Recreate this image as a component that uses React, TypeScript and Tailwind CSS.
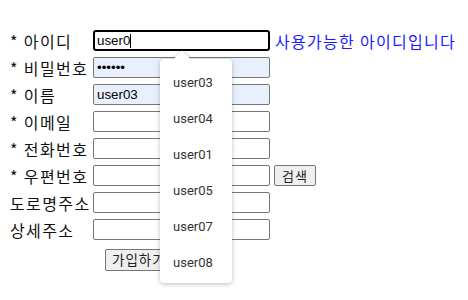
import React from "react";

const rows = [
  { label: "* 비밀번호", value: "••••••", filled: true },
  { label: "* 이름", value: "user03", filled: true },
  { label: "* 이메일", value: "" },
  { label: "* 전화번호", value: "" },
  { label: "* 우편번호", value: "", search: true },
  { label: "도로명주소", value: "" },
  { label: "상세주소", value: "" },
];

const options = ["user03", "user04", "user01", "user05", "user07", "user08"];

export default function App() {
  return (
    <div className="relative w-[468px] h-[300px] bg-white overflow-hidden font-['Noto_Sans_CJK_KR',sans-serif] text-[16px] text-[#111]">
      <div className="pt-[30px] pl-[10px] flex flex-col gap-[6px]">
        <div className="flex items-center h-[21px]">
          <span className="w-[83px] leading-none tracking-[1.4px]">* 아이디</span>
          <div className="w-[177px] h-[21px] border-2 border-black rounded-[3px] flex items-center pl-[2px] font-['Liberation_Sans',sans-serif] text-[13.33px] text-black">
            user0<span className="inline-block w-px h-[14px] bg-black"></span>
          </div>
          <span className="ml-[5px] leading-none tracking-[1.3px] text-[#1a1aff]">사용가능한 아이디입니다</span>
        </div>
        {rows.map((r) => (
          <div key={r.label} className="flex items-center h-[21px]">
            <span className="w-[83px] leading-none tracking-[1.4px] whitespace-nowrap">{r.label}</span>
            <div
              className={`w-[177px] h-[21px] border border-[#767676] rounded-[2px] flex items-center pl-[3px] font-['Liberation_Sans',sans-serif] text-[13.33px] text-black ${
                r.filled ? "bg-[#e8f0fe]" : "bg-white"
              }`}
            >
              {r.value}
            </div>
            {r.search && (
              <button className="ml-[4px] w-[42px] h-[21px] border border-[#767676] rounded-[2px] bg-[#efefef] text-[13px] leading-none tracking-[1px] text-[#222]">
                검색
              </button>
            )}
          </div>
        ))}
        <div className="h-[22px] pl-[95px]">
          <button className="h-[22px] px-[6px] border border-[#767676] rounded-[2px] bg-[#efefef] text-[13.5px] leading-none tracking-[1px] text-[#222]">
            가입하기
          </button>
        </div>
      </div>

      <div className="absolute left-[160px] top-[59px] w-[72px] h-[224px] bg-white rounded-[4px] shadow-[0_1px_5px_rgba(0,0,0,0.25)] pt-[6px] font-['Roboto',sans-serif] text-[13px] text-[#333]">
        <div className="absolute left-[16px] top-[-6px] w-[12px] h-[12px] bg-white rotate-45 shadow-[-1px_-1px_2px_rgba(0,0,0,0.12)]"></div>
        {options.map((o) => (
          <div key={o} className="relative h-[36px] flex items-center pl-[13px]">
            {o}
          </div>
        ))}
      </div>
    </div>
  );
}
